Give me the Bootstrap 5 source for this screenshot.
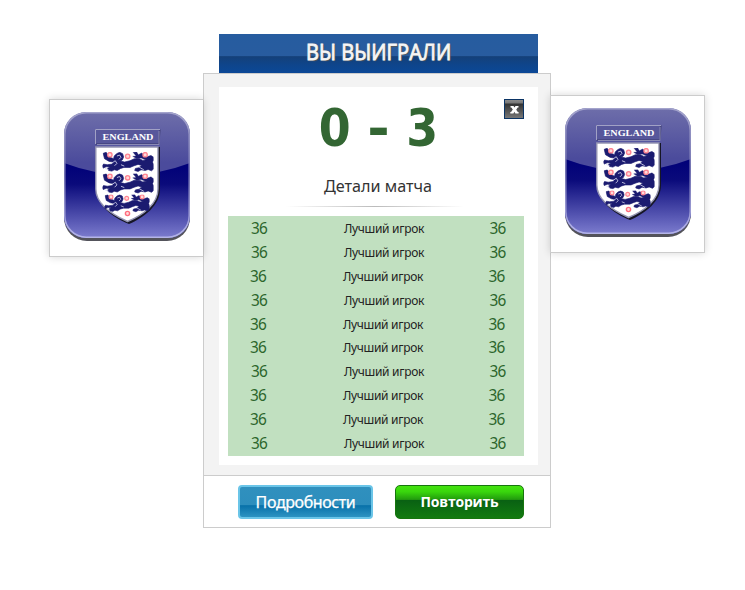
<!DOCTYPE html>
<html lang="ru">
<head>
<meta charset="utf-8">
<meta name="viewport" content="width=device-width, initial-scale=1">
<title>Вы выиграли</title>
<link rel="stylesheet" href="https://cdn.jsdelivr.net/npm/bootstrap@5.3.0/dist/css/bootstrap.min.css">
<style>
body{font-family:"Noto Sans","Open Sans",sans-serif;background:#fff;color:#333}
.stage{padding:34px 0 0 49px;width:745px;height:590px;overflow:hidden}
.team{height:158px;border:1px solid #ccc;background:#fff;box-shadow:0 0 8px rgba(0,0,0,.16);z-index:2}
.team-home{width:154px;border-right:0;margin-top:65px;padding:12px 0 0 14px}
.team-away{width:155px;margin-top:61px;padding:12px 0 0 14px;border-left:1px solid #ccc;margin-left:-1px}
.team svg{display:block}
.middle{width:348px}
.banner{width:319px;height:39px;margin-left:16px;background:linear-gradient(#265c9f 0,#285c9f 56%,#144079 58%,#0e458c 80%,#0b4897);color:#f6f6f6;font:21.5px/36px "Open Sans","Noto Sans",sans-serif;text-shadow:1px 1px 1px #555,0 0 2px #777;-webkit-text-stroke:.8px #f6f6f6}
.banner span{display:inline-block;transform:scaleX(.935)}
.panel{height:455px;border:1px solid #ccc;background:#fff}
.panel-top{height:402px;background:#f3f3f3;border-bottom:1px solid #ccc;padding:13px 12px 10px 15px}
.sheet{height:378px;width:319px;background:#fff;padding:0 14px 0 9px}
.score{height:81px;font:bold 51px/83px "DejaVu Sans Condensed","DejaVu Sans",sans-serif;font-stretch:condensed;letter-spacing:1.1px;color:#363;padding-left:6px}
.score span{display:inline-block;transform:scaleX(1.18)}
.closer{top:12px;right:14px;width:20px;height:20px;border:1px solid #0b3465;background:linear-gradient(#8b8b8b 0,#777 3px,#333 4px,#777 100%);color:#fff;padding:0}
.closer svg{display:block;margin:auto}
.details{height:38px;font-size:16.2px;line-height:37px;color:#333;padding-left:4px}
.rule{height:1px;width:178px;margin:0 0 9px 58px;background:linear-gradient(90deg,#fff,#bbb 50%,#fff)}
.stats{height:240px;background:#c1e0c0;padding-top:1px}
.stat{height:23.9px;line-height:24.4px;font-size:12px;color:#222}
.stat b{font-weight:400;font-size:15.4px;letter-spacing:-.8px;color:#2c662c;width:62px}
.stat b:last-child{width:53px}
.stat span{padding-left:7px;letter-spacing:-.3px}
.stat.shift{position:relative;left:-1px}
.actions{height:51px;padding:9px 26px 0 34px}
.act{height:34px;padding:0;color:#fff!important;border-radius:4px}
.act-more{width:135px;border:2px solid #6bc5e8;background:linear-gradient(#3090be 0,#2d8ebd 60%,#0871a9 62%,#2d93c2 100%)!important;border-color:#6bc5e8!important;font:16px/28px "Noto Sans",sans-serif;letter-spacing:-.4px;-webkit-text-stroke:.25px #fff}
.act-again{width:129px;border:1px solid #17750e!important;background:linear-gradient(#43e30e 0,#39d60d 18%,#229b0e 42%,#096113 45%,#137b10 100%)!important;font:bold 14px/30px "Open Sans",sans-serif;letter-spacing:-.2px;border-radius:5px}
</style>
</head>
<body>
<svg width="0" height="0" class="position-absolute" aria-hidden="true">
<defs>
<linearGradient id="deep" x1="0" y1="0" x2="0" y2="1"><stop offset="0" stop-color="#000078"/><stop offset=".28" stop-color="#0a0a7b"/><stop offset="1" stop-color="#7c7cce"/></linearGradient>
<linearGradient id="gloss" x1="0" y1="0" x2="0" y2="1"><stop offset="0" stop-color="#6e6eaa"/><stop offset=".4" stop-color="#4b4b9c"/></linearGradient>
<linearGradient id="edge" x1="0" y1="0" x2="0" y2="1"><stop offset="0" stop-color="#a4a4cc"/><stop offset=".5" stop-color="#7878b4"/><stop offset="1" stop-color="#b4b4e8"/></linearGradient>
<clipPath id="tile"><rect width="126" height="126" rx="22"/></clipPath>
<symbol id="lion" viewBox="0 0 152 62">
<path fill="#1b1b70" stroke="#1b1b70" stroke-width="2" d="M2 4l9-3 5 7 7 8 10 4 2-8 7-7 9-4 9 4 3 10-4 9-6 3 13 3 16-4 13-6 15 0 10 5 11-2 12-8 8-1 3 8-5 8 4 8 0 12-7 6-10-4-9 3-12-2-9 5-10-3 2-6 10-2 9-7-11-3-12 4-12 5-18 0-10 3-10 6-9-2-7 4-10-2-3-6 7-4-11-1-9 4-3-6 4-6 11 2 15-2 3-6-12-2-14-8z"/>
<path fill="#1b1b70" stroke="#1b1b70" stroke-width="1" d="M91 1l11-1 5 8 9-5 9 5 5 7 15-5 4 4-4 7-15 3-15-6-13 2-12-7 10-1z"/>
<path d="M43 12l8-3 4 7-6 6M28 33l10-7 5 8-7 7M55 38l10 4M109 45l14 8M8 49l10 4" fill="none" stroke="#d5d5ee" stroke-width="2.5"/>
<g fill="#ffdada" stroke="#ff8390" stroke-width="4"><circle cx="22" cy="8" r="6.5"/><circle cx="75" cy="13" r="6.5"/><circle cx="127" cy="8" r="6.5"/></g>
</symbol>
<symbol id="crest" viewBox="0 0 126 129">
<rect y="3" width="126" height="126" rx="23" fill="#53535b"/>
<g clip-path="url(#tile)"><rect width="126" height="126" fill="url(#gloss)"/><path d="M0 51Q63 75 126 51V126H0z" fill="url(#deep)"/></g>
<rect x=".8" y=".8" width="124.4" height="124.4" rx="21.5" fill="none" stroke="url(#edge)" stroke-width="1.5"/>
<path d="M31.5 17.5H96L95 32H31.5z" fill="#57579b" stroke="#38386d"/><path d="M31.5 32V17.5H96" fill="none" stroke="#a1a1c5"/><path d="M33 32.5H95V19" fill="none" stroke="#8a8ab4"/>
<text x="64" y="27.8" text-anchor="middle" textLength="51" lengthAdjust="spacingAndGlyphs" font-family="Liberation Serif,serif" font-weight="bold" font-size="8.2" fill="#fff">ENGLAND</text>
<path d="M33 35H96V77C96 93 81 105 65 112C48 105 33 94 33 77z" fill="#161626"/>
<path d="M31.8 35H94V77C94 92 79 103 63.5 109.5C47 102 31.8 92 31.8 77z" fill="#fff" stroke="#9494b2" stroke-width="1.4"/>
<use href="#lion" x="38.5" y="40" width="51" height="20.8"/>
<use href="#lion" x="38.5" y="61.5" width="51" height="20.8"/>
<use href="#lion" x="40.5" y="82.5" width="45" height="18.4"/>
<circle cx="63.5" cy="101.5" r="2.1" fill="#ffdada" stroke="#ff6d7d" stroke-width="1.4"/>
</symbol>
</defs>
</svg>
<main class="stage d-flex align-items-start">
<section class="team team-home position-relative"><svg width="126" height="129" role="img" aria-label="England"><use href="#crest"/></svg></section>
<div class="middle">
<header class="banner text-center"><span>ВЫ ВЫИГРАЛИ</span></header>
<section class="panel">
<div class="panel-top"><div class="sheet position-relative">
<button class="closer btn rounded-0 position-absolute" type="button" aria-label="Закрыть"><svg width="18" height="18" viewBox="0 0 18 18"><path d="M5.5 6h3l1 1.6 1-1.6h3v1.4h-.8l-1.5 2.3 1.6 2.4h.8v1.4h-3.2l-1-1.7-1 1.7H5.3v-1.4h.8l1.7-2.5-1.5-2.2h-.8z" fill="#fff"/></svg></button>
<div class="score text-center">0 <span>-</span> 3</div>
<div class="details text-center">Детали матча</div>
<div class="rule"></div>
<div class="stats">
<div class="stat d-flex justify-content-between text-center"><b>36</b><span>Лучший игрок</span><b>36</b></div>
<div class="stat d-flex justify-content-between text-center"><b>36</b><span>Лучший игрок</span><b>36</b></div>
<div class="stat shift d-flex justify-content-between text-center"><b>36</b><span>Лучший игрок</span><b>36</b></div>
<div class="stat d-flex justify-content-between text-center"><b>36</b><span>Лучший игрок</span><b>36</b></div>
<div class="stat shift d-flex justify-content-between text-center"><b>36</b><span>Лучший игрок</span><b>36</b></div>
<div class="stat shift d-flex justify-content-between text-center"><b>36</b><span>Лучший игрок</span><b>36</b></div>
<div class="stat d-flex justify-content-between text-center"><b>36</b><span>Лучший игрок</span><b>36</b></div>
<div class="stat shift d-flex justify-content-between text-center"><b>36</b><span>Лучший игрок</span><b>36</b></div>
<div class="stat shift d-flex justify-content-between text-center"><b>36</b><span>Лучший игрок</span><b>36</b></div>
<div class="stat d-flex justify-content-between text-center"><b>36</b><span>Лучший игрок</span><b>36</b></div>
</div></div></div>
<div class="actions d-flex justify-content-between"><button type="button" class="btn act act-more">Подробности</button><button type="button" class="btn act act-again">Повторить</button></div>
</section>
</div>
<section class="team team-away position-relative"><svg width="126" height="129" role="img" aria-label="England"><use href="#crest"/></svg></section>
</main>
<script src="https://cdn.jsdelivr.net/npm/bootstrap@5.3.0/dist/js/bootstrap.bundle.min.js"></script>
</body>
</html>
